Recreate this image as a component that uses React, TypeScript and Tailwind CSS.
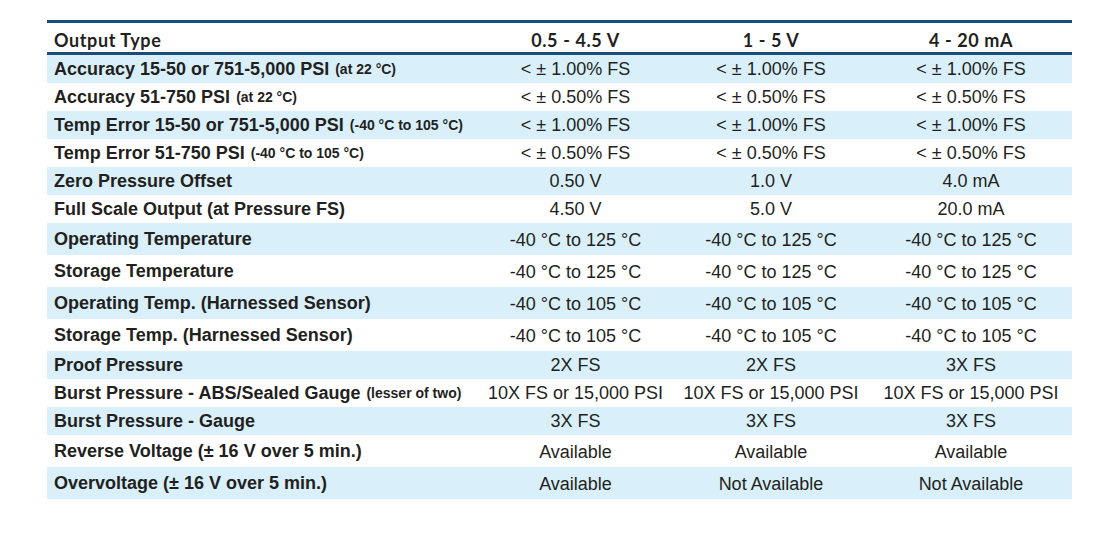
const rows: { label: string; note?: string; values: string[]; tall?: boolean }[] = [
  { label: 'Accuracy 15-50 or 751-5,000 PSI', note: '(at 22 °C)', values: ['< ± 1.00% FS', '< ± 1.00% FS', '< ± 1.00% FS'] },
  { label: 'Accuracy 51-750 PSI', note: '(at 22 °C)', values: ['< ± 0.50% FS', '< ± 0.50% FS', '< ± 0.50% FS'] },
  { label: 'Temp Error 15-50 or 751-5,000 PSI', note: '(-40 °C to 105 °C)', values: ['< ± 1.00% FS', '< ± 1.00% FS', '< ± 1.00% FS'] },
  { label: 'Temp Error 51-750 PSI', note: '(-40 °C to 105 °C)', values: ['< ± 0.50% FS', '< ± 0.50% FS', '< ± 0.50% FS'] },
  { label: 'Zero Pressure Offset', values: ['0.50 V', '1.0 V', '4.0 mA'] },
  { label: 'Full Scale Output (at Pressure FS)', values: ['4.50 V', '5.0 V', '20.0 mA'] },
  { label: 'Operating Temperature', values: ['-40 °C to 125 °C', '-40 °C to 125 °C', '-40 °C to 125 °C'], tall: true },
  { label: 'Storage Temperature', values: ['-40 °C to 125 °C', '-40 °C to 125 °C', '-40 °C to 125 °C'], tall: true },
  { label: 'Operating Temp. (Harnessed Sensor)', values: ['-40 °C to 105 °C', '-40 °C to 105 °C', '-40 °C to 105 °C'], tall: true },
  { label: 'Storage Temp. (Harnessed Sensor)', values: ['-40 °C to 105 °C', '-40 °C to 105 °C', '-40 °C to 105 °C'], tall: true },
  { label: 'Proof Pressure', values: ['2X FS', '2X FS', '3X FS'] },
  { label: 'Burst Pressure - ABS/Sealed Gauge', note: '(lesser of two)', values: ['10X FS or 15,000 PSI', '10X FS or 15,000 PSI', '10X FS or 15,000 PSI'] },
  { label: 'Burst Pressure - Gauge', values: ['3X FS', '3X FS', '3X FS'] },
  { label: 'Reverse Voltage (± 16 V over 5 min.)', values: ['Available', 'Available', 'Available'], tall: true },
  { label: 'Overvoltage (± 16 V over 5 min.)', values: ['Available', 'Not Available', 'Not Available'], tall: true },
];

const cols = 'grid grid-cols-[432px_193px_198px_202px]';

export default function App() {
  return (
    <div className="w-[1112px] h-[547px] bg-white pt-[20px] pl-[47px] text-[#231f20] font-['Liberation_Sans',Arial,sans-serif]">
      <div className="w-[1025px]">
        {/* Header */}
        <div className={`${cols} h-[35px] border-t-[3px] border-b-[3px] border-[#1d4d76] font-['Lato',sans-serif] font-bold text-[18px] tracking-[0.6px]`}>
          <div className="flex items-center pl-[7px] pt-[4px]">Output Type</div>
          <div className="flex items-center justify-center pt-[4px]">0.5 - 4.5 V</div>
          <div className="flex items-center justify-center pt-[4px]">1 - 5 V</div>
          <div className="flex items-center justify-center pt-[4px]">4 - 20 mA</div>
        </div>

        {rows.map((row, i) => (
          <div
            key={row.label}
            className={`${cols} ${row.tall ? 'h-[32px]' : 'h-[28px]'} ${i % 2 === 0 ? 'bg-[#d9f0fa]' : 'bg-white'}`}
          >
            <div className="flex items-center pl-[7px] font-bold text-[18px] whitespace-nowrap">
              {row.label}
              {row.note && <span className="ml-[6px] text-[14px] pt-[1px]">{row.note}</span>}
            </div>
            {row.values.map((v, j) => (
              <div
                key={j}
                className={`flex items-center justify-center text-[18px] whitespace-nowrap ${row.tall ? 'pt-[3px]' : ''}`}
              >
                {v}
              </div>
            ))}
          </div>
        ))}
      </div>
    </div>
  );
}
